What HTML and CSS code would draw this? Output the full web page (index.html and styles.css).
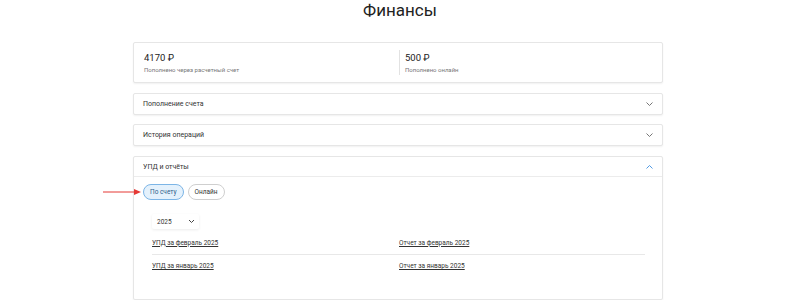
FILE: index.html
```html
<!DOCTYPE html>
<html lang="ru">
<head>
<meta charset="utf-8">
<title>Финансы</title>
<link rel="stylesheet" href="styles.css">
</head>
<body>
<h1 class="title">Финансы</h1>
<main class="wrap">
  <section class="card stats">
    <div class="stat">
      <div class="stat-value">4170 ₽</div>
      <div class="stat-label">Пополнено через расчетный счет</div>
    </div>
    <div class="stat stat-second">
      <div class="stat-value">500 ₽</div>
      <div class="stat-label">Пополнено онлайн</div>
    </div>
  </section>

  <section class="card acc">
    <div class="acc-head">
      <span>Пополнение счета</span>
      <svg class="chev" width="9" height="6" viewBox="0 0 9 6"><path d="M1.5 1.5l3 3 3-3" fill="none" stroke="#666" stroke-width="0.9"/></svg>
    </div>
  </section>

  <section class="card acc">
    <div class="acc-head">
      <span>История операций</span>
      <svg class="chev" width="9" height="6" viewBox="0 0 9 6"><path d="M1.5 1.5l3 3 3-3" fill="none" stroke="#666" stroke-width="0.9"/></svg>
    </div>
  </section>

  <section class="card acc open">
    <div class="acc-head acc-head-open">
      <span>УПД и отчёты</span>
      <svg class="chev" width="9" height="6" viewBox="0 0 9 6"><path d="M1.5 4.5l3-3 3 3" fill="none" stroke="#3d8fe0" stroke-width="0.9"/></svg>
    </div>
    <div class="acc-body">
      <div class="pills">
        <span class="pill pill-active">
          По счету
          <svg class="arrow" width="40" height="8" viewBox="0 0 40 8"><path d="M0 4h33" stroke="#e53935" stroke-width="1"/><path d="M31 1l7 3-7 3z" fill="#e53935"/></svg>
        </span>
        <span class="pill">Онлайн</span>
      </div>
      <div class="select">
        <span>2025</span>
        <svg width="7" height="5" viewBox="0 0 7 5"><path d="M1 1l2.5 2.5L6 1" fill="none" stroke="#444" stroke-width="1"/></svg>
      </div>
      <div class="docs">
        <div class="doc-row">
          <a class="doc" href="#">УПД за февраль 2025</a>
          <a class="doc" href="#">Отчет за февраль 2025</a>
        </div>
        <div class="doc-row">
          <a class="doc" href="#">УПД за январь 2025</a>
          <a class="doc" href="#">Отчет за январь 2025</a>
        </div>
      </div>
    </div>
  </section>
</main>
</body>
</html>
```
FILE: styles.css
```css
* { box-sizing: border-box; }
html, body { margin: 0; padding: 0; background: #fff; }
body {
  font-family: Roboto, "Liberation Sans", Arial, sans-serif;
  color: #222;
  overflow: hidden;
}
.title {
  margin: 0;
  font-size: 17px;
  line-height: 20px;
  font-weight: 400;
  text-align: center;
  color: #222;
}
.wrap {
  width: 530px;
  margin: 22px 0 0 133px;
  display: flex;
  flex-direction: column;
  gap: 9px;
}
.card {
  background: #fff;
  border: 1px solid #e6e6e6;
  border-radius: 2px;
  box-shadow: 0 1px 2px rgba(0,0,0,0.06);
}
.stats {
  display: grid;
  grid-template-columns: 1fr 1fr;
  height: 41px;
  padding: 7px 10px;
  margin-bottom: 1px;
}
.stat { display: flex; flex-direction: column; justify-content: center; }
.stat-second {
  border-left: 1px solid #e2e2e2;
  padding-left: 5px;
  margin-left: 1px;
}
.stat-value { font-size: 9.5px; line-height: 13px; color: #222; }
.stat-label { font-size: 6px; line-height: 9px; color: #777; margin-top: 1px; }
.acc-head {
  height: 20px;
  display: flex;
  align-items: center;
  justify-content: space-between;
  padding: 0 8px 0 9px;
  font-size: 7px;
  color: #333;
}
.acc-head-open { border-bottom: 1px solid #ececec; }
.acc.open { height: 144px; margin-top: 1px; }
.acc-body { padding: 7px 17px 0 9px; }
.pills { display: flex; gap: 4px; }
.pill {
  position: relative;
  height: 16px;
  padding: 0 6px;
  border: 1px solid #cfcfcf;
  border-radius: 8px;
  display: flex;
  align-items: center;
  font-size: 6.5px;
  color: #333;
  background: #fff;
}
.pill-active {
  background: #e4f1fc;
  border-color: #7cb5e6;
  color: #2c5e8a;
}
.arrow {
  position: absolute;
  left: -41px;
  top: 3px;
}
.select {
  margin: 14px 0 0 9px;
  width: 47px;
  height: 15px;
  display: flex;
  align-items: center;
  justify-content: space-between;
  padding: 0 4px 0 5px;
  font-size: 6.5px;
  color: #333;
  border-radius: 2px;
  box-shadow: 0 1px 3px rgba(0,0,0,0.08);
}
.docs { margin: 2px 0 0 9px; }
.doc-row {
  display: grid;
  grid-template-columns: 247px 1fr;
  height: 23px;
  align-items: center;
}
.doc-row + .doc-row { border-top: 1px solid #e8e8e8; }
.doc {
  font-size: 6.5px;
  color: #333;
  text-decoration: underline;
}
```
